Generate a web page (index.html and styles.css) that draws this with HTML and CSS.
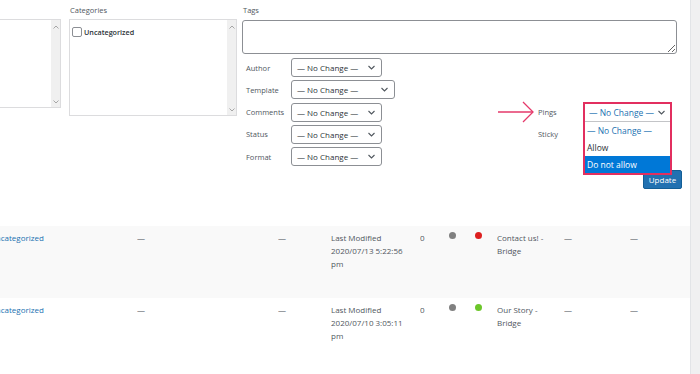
FILE: index.html
```html
<!DOCTYPE html>
<html lang="en">
<head>
  <meta charset="UTF-8" />
  <meta name="viewport" content="width=device-width, initial-scale=1.0" />
  <title>Posts - Quick Edit</title>
  <link rel="stylesheet" href="styles.css">
</head>
<body>
  <div class="screen">
    <div class="main">
      <div class="quick-edit">
        <div class="col col-tax">
          <div class="scroll-box box-short">
            <div class="box-body"></div>
            <div class="scrollbar">
              <svg class="chev" width="6" height="4" viewBox="0 0 6 4"><polyline points="0.5,3.5 3,1 5.5,3.5" /></svg>
              <svg class="chev" width="6" height="4" viewBox="0 0 6 4"><polyline points="0.5,0.5 3,3 5.5,0.5" /></svg>
            </div>
          </div>
        </div>

        <div class="col col-cats">
          <div class="field-title">Categories</div>
          <div class="scroll-box box-tall">
            <div class="box-body">
              <label class="cat-item"><span class="check"></span>Uncategorized</label>
            </div>
            <div class="scrollbar">
              <svg class="chev" width="6" height="4" viewBox="0 0 6 4"><polyline points="0.5,3.5 3,1 5.5,3.5" /></svg>
              <svg class="chev" width="6" height="4" viewBox="0 0 6 4"><polyline points="0.5,0.5 3,3 5.5,0.5" /></svg>
            </div>
          </div>
        </div>

        <div class="col col-main">
          <div class="field-title">Tags</div>
          <textarea class="tags"></textarea>

          <div class="fields">
            <div class="fields-left">
              <div class="field-row">
                <span class="field-label">Author</span>
                <div class="select"><span>— No Change —</span><svg width="7" height="5" viewBox="0 0 7 5"><polyline points="0.5,1 3.5,4 6.5,1" /></svg></div>
              </div>
              <div class="field-row">
                <span class="field-label">Template</span>
                <div class="select select-wide"><span>— No Change —</span><svg width="7" height="5" viewBox="0 0 7 5"><polyline points="0.5,1 3.5,4 6.5,1" /></svg></div>
              </div>
              <div class="field-row">
                <span class="field-label">Comments</span>
                <div class="select"><span>— No Change —</span><svg width="7" height="5" viewBox="0 0 7 5"><polyline points="0.5,1 3.5,4 6.5,1" /></svg></div>
              </div>
              <div class="field-row">
                <span class="field-label">Status</span>
                <div class="select"><span>— No Change —</span><svg width="7" height="5" viewBox="0 0 7 5"><polyline points="0.5,1 3.5,4 6.5,1" /></svg></div>
              </div>
              <div class="field-row">
                <span class="field-label">Format</span>
                <div class="select"><span>— No Change —</span><svg width="7" height="5" viewBox="0 0 7 5"><polyline points="0.5,1 3.5,4 6.5,1" /></svg></div>
              </div>
            </div>

            <div class="fields-right">
              <div class="field-row pings-row">
                <svg class="pointer" width="37" height="22" viewBox="0 0 37 22"><line x1="0" y1="11" x2="35" y2="11" /><polyline points="25,1 35,11 25,21" /></svg>
                <span class="field-label">Pings</span>
                <div class="open-select">
                  <div class="open-head"><span>— No Change —</span><svg width="7" height="5" viewBox="0 0 7 5"><polyline points="0.5,1 3.5,4 6.5,1" /></svg></div>
                  <ul class="options">
                    <li class="option option-default">— No Change —</li>
                    <li class="option">Allow</li>
                    <li class="option option-active">Do not allow</li>
                  </ul>
                </div>
              </div>
              <div class="field-row">
                <span class="field-label">Sticky</span>
              </div>
            </div>
          </div>

          <div class="actions">
            <button class="button-update">Update</button>
          </div>
        </div>
      </div>

      <div class="post-row alt">
        <div class="cell"><a href="#">Uncategorized</a></div>
        <div class="cell">—</div>
        <div class="cell">—</div>
        <div class="cell cell-date">Last Modified<br>2020/07/13 5:22:56 pm</div>
        <div class="cell">0</div>
        <div class="cell"><span class="dot dot-grey"></span></div>
        <div class="cell"><span class="dot dot-red"></span></div>
        <div class="cell cell-title">Contact us! - Bridge</div>
        <div class="cell">—</div>
        <div class="cell">—</div>
      </div>

      <div class="post-row">
        <div class="cell"><a href="#">Uncategorized</a></div>
        <div class="cell">—</div>
        <div class="cell">—</div>
        <div class="cell cell-date">Last Modified<br>2020/07/10 3:05:11 pm</div>
        <div class="cell">0</div>
        <div class="cell"><span class="dot dot-grey"></span></div>
        <div class="cell"><span class="dot dot-green"></span></div>
        <div class="cell cell-title">Our Story - Bridge</div>
        <div class="cell">—</div>
        <div class="cell">—</div>
      </div>
    </div>
    <div class="edge"></div>
  </div>
</body>
</html>
```

FILE: styles.css
```css
* {
  box-sizing: border-box;
}

body {
  margin: 0;
  font-family: "Open Sans", "Noto Sans", sans-serif;
  font-size: 8px;
  color: #50575e;
  background-color: #fff;
}

.screen {
  display: flex;
  height: 374px;
  overflow: hidden;
}

.main {
  width: 690px;
  background-color: #fff;
}

.edge {
  flex: 1;
  background-color: #f0f0f1;
  border-left: 1px solid #e2e4e7;
}

/* quick edit panel */

.quick-edit {
  display: flex;
  height: 226px;
  padding-top: 4px;
}

.col-tax {
  width: 61px;
  padding-top: 15px;
  overflow: hidden;
}

.col-cats {
  width: 168px;
  margin-left: 8px;
}

.col-main {
  flex: 1;
  margin-left: 5px;
}

.field-title {
  height: 12px;
  line-height: 12px;
  font-size: 7.5px;
  padding-left: 1px;
}

.scroll-box {
  display: flex;
  border: 1px solid #dcdcde;
  background-color: #fff;
}

.box-short {
  height: 89px;
  margin-left: -4px;
}

.box-tall {
  height: 97px;
  margin-top: 3px;
}

.box-body {
  flex: 1;
  padding: 7px 2px;
}

.scrollbar {
  width: 9px;
  background-color: #f0f0f0;
  display: flex;
  flex-direction: column;
  justify-content: space-between;
  align-items: center;
  padding: 5px 0 3px;
}

.chev polyline {
  fill: none;
  stroke: #a6a6a6;
  stroke-width: 1;
}

.cat-item {
  display: flex;
  align-items: center;
  gap: 2px;
  font-size: 7.2px;
  font-weight: 600;
  color: #2c3338;
}

.check {
  width: 10px;
  height: 10px;
  border: 1px solid #8c8f94;
  border-radius: 2px;
}

.tags {
  display: block;
  width: 435px;
  height: 34px;
  margin: 4px 0 0;
  border: 1px solid #8c8f94;
  border-radius: 3px;
  resize: vertical;
  font-family: inherit;
}

.fields {
  display: flex;
  margin-top: 4px;
}

.fields-left {
  width: 296px;
  padding-left: 4px;
  display: flex;
  flex-direction: column;
  gap: 3.25px;
}

.fields-right {
  padding-top: 44.5px;
  display: flex;
  flex-direction: column;
  gap: 3.25px;
}

.field-row {
  display: flex;
  align-items: center;
  height: 19px;
}

.field-label {
  width: 45px;
  font-size: 7.5px;
}

.select {
  display: flex;
  align-items: center;
  justify-content: space-between;
  width: 91px;
  height: 19px;
  padding: 0 6px 0 5px;
  border: 1px solid #8c8f94;
  border-radius: 3px;
  color: #2c3338;
}

.select-wide {
  width: 104px;
}

.select svg polyline,
.open-head svg polyline {
  fill: none;
  stroke: #50575e;
  stroke-width: 1.1;
}

/* the opened pings dropdown */

.pings-row {
  position: relative;
}

.pointer {
  position: absolute;
  left: -40px;
  top: -2px;
}

.pointer line,
.pointer polyline {
  fill: none;
  stroke: #e5396a;
  stroke-width: 1.3;
}

.open-select {
  position: absolute;
  left: 45px;
  top: -1px;
  width: 89px;
  border: 2px solid #e22f5f;
  background-color: #fff;
  z-index: 2;
  font-size: 8.5px;
}

.open-head {
  display: flex;
  align-items: center;
  justify-content: space-between;
  height: 18px;
  padding: 0 5px 0 4px;
  border-bottom: 1px solid #c3c4c7;
  color: #2271b1;
}

.options {
  list-style: none;
  margin: 0;
  padding: 0;
}

.option {
  height: 17px;
  line-height: 17px;
  padding-left: 2px;
  color: #2c3338;
}

.option-default {
  color: #2271b1;
}

.option-active {
  background-color: #0078d7;
  color: #fff;
}

.actions {
  display: flex;
  justify-content: flex-end;
  margin-top: 4px;
  padding-right: 8px;
}

.button-update {
  width: 39px;
  height: 19px;
  padding: 0;
  background-color: #2271b1;
  border: 1px solid #135e96;
  border-radius: 2px;
  color: #fff;
  font-family: inherit;
  font-size: 8px;
}

/* list rows */

.post-row {
  display: grid;
  grid-template-columns: 137px 141px 53px 89px 28px 26px 23px 67px 66px 1fr;
  height: 72px;
  padding-top: 5px;
  line-height: 13px;
}

.post-row.alt {
  background-color: #f9f9f9;
}

.cell {
  overflow: hidden;
}

.cell a {
  display: block;
  margin-left: -10px;
  color: #2271b1;
  text-decoration: none;
}

.cell-date {
  padding-right: 10px;
}

.cell-title {
  padding-right: 8px;
}

.dot {
  display: block;
  width: 7px;
  height: 7px;
  margin-top: 1px;
  margin-left: 1px;
  border-radius: 50%;
}

.dot-grey {
  background-color: #808080;
}

.dot-red {
  background-color: #dd2020;
}

.dot-green {
  background-color: #6cc62a;
}
```
